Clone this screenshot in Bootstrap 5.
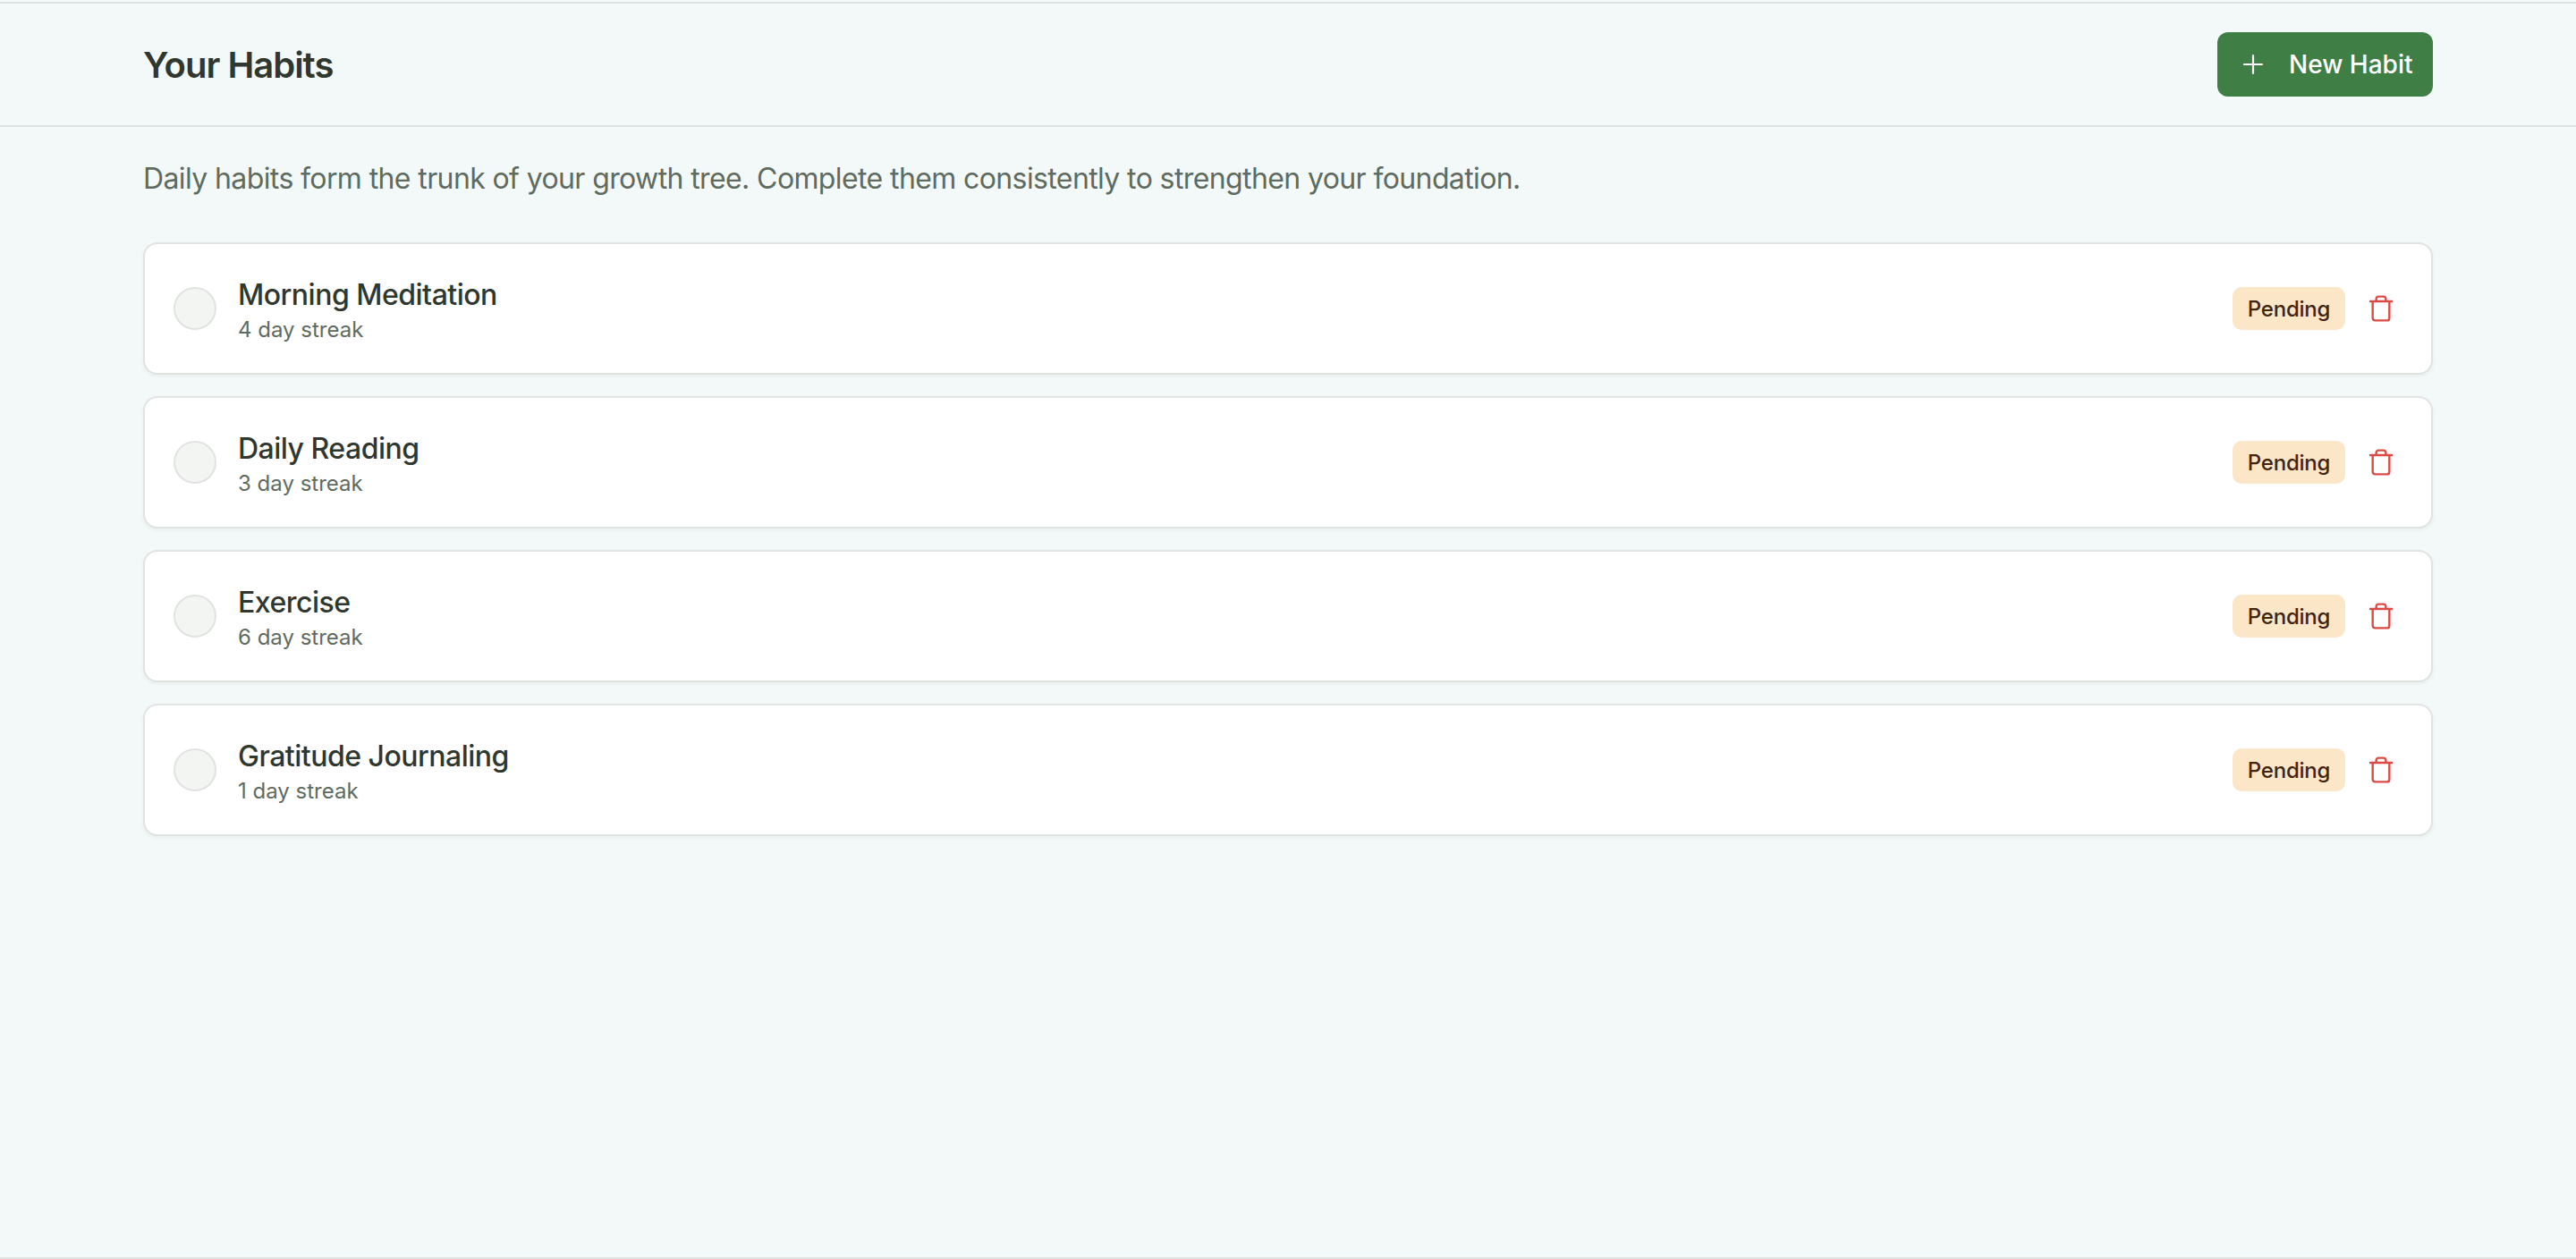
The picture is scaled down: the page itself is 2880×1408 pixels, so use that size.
<!DOCTYPE html>
<html lang="en">
<head>
<meta charset="utf-8">
<title>Your Habits</title>
<link href="https://cdn.jsdelivr.net/npm/bootstrap@5.3.0/dist/css/bootstrap.min.css" rel="stylesheet">
<style>
body{background:#f3f9f9;font-family:Inter,"Liberation Sans",sans-serif;color:#2f372f}
.page-frame{height:1406px;margin-top:2px;border-top:2px solid #e1e3e1;border-bottom:2px solid #e1e3e1}
.top-head{height:138px;border-bottom:2px solid #e1e3e1;padding:0 160px}
.top-title{font-size:40px;font-weight:600;letter-spacing:-1px;color:#2f372f;margin:2px 0 0;line-height:48px}
.new-btn{background:#3f7f46;border:0;border-radius:12px;color:#fff;font-size:28px;font-weight:500;height:72px;width:241px;padding:0 0 0 28px;gap:28px;line-height:40px}
.new-btn:hover,.new-btn:active{background:#3f7f46!important;color:#fff!important}
.plus-ic{width:24px;height:24px;flex:none}
.main-area{padding:0 160px}
.intro{font-size:32px;line-height:48px;letter-spacing:-.61px;color:#5f6b5f;margin:34px 0 47px}
.habit-box{height:148px;background:#fff;border:2px solid #e1e3e1;border-radius:16px;box-shadow:0 2px 4px rgba(0,0,0,.05);padding:0 32px;margin-bottom:24px;gap:24px}
.check-dot{width:48px;height:48px;border-radius:50%;background:#f3f5f3;border:2px solid #e1e3e1;flex:none}
.habit-name{font-size:32px;font-weight:500;line-height:44px;letter-spacing:-.5px;color:#2f372f;margin-top:3px}
.habit-streak{font-size:24px;line-height:32px;color:#5f6b5f;margin-top:1px}
.state-tag{width:126px;height:48px;background:#fce6c8;color:#42240f;border-radius:10px;font-size:24px;font-weight:500;line-height:32px;letter-spacing:-.2px;padding-top:1px}
.trash-wrap{width:26px;margin:0 11px 0 3px}
.trash-ic{width:32px;height:32px;flex:none;margin:0 -3px}
</style>
</head>
<body>
<div class="page-frame d-flex flex-column">
  <header class="top-head d-flex align-items-center justify-content-between">
    <h1 class="top-title">Your Habits</h1>
    <button type="button" class="btn new-btn d-flex align-items-center">
      <svg class="plus-ic" viewBox="0 0 24 24" fill="none" stroke="#fff" stroke-width="2.2" stroke-linecap="round"><path d="M12 2v20M2 12h20"/></svg>
      <span>New Habit</span>
    </button>
  </header>
  <main class="main-area">
    <p class="intro">Daily habits form the trunk of your growth tree. Complete them consistently to strengthen your foundation.</p>
    <div class="habit-box d-flex align-items-center">
      <div class="check-dot"></div>
      <div class="flex-grow-1"><div class="habit-name">Morning Meditation</div><div class="habit-streak">4 day streak</div></div>
      <span class="state-tag d-flex align-items-center justify-content-center">Pending</span>
      <span class="trash-wrap d-flex"><svg class="trash-ic" viewBox="0 0 24 24" fill="none" stroke="#dd4a44" stroke-width="1.8" stroke-linecap="round" stroke-linejoin="round"><path d="M3 6h18M19 6v14a2 2 0 0 1-2 2H7a2 2 0 0 1-2-2V6M8 6V4a2 2 0 0 1 2-2h4a2 2 0 0 1 2 2v2"/></svg></span>
    </div>
    <div class="habit-box d-flex align-items-center">
      <div class="check-dot"></div>
      <div class="flex-grow-1"><div class="habit-name">Daily Reading</div><div class="habit-streak">3 day streak</div></div>
      <span class="state-tag d-flex align-items-center justify-content-center">Pending</span>
      <span class="trash-wrap d-flex"><svg class="trash-ic" viewBox="0 0 24 24" fill="none" stroke="#dd4a44" stroke-width="1.8" stroke-linecap="round" stroke-linejoin="round"><path d="M3 6h18M19 6v14a2 2 0 0 1-2 2H7a2 2 0 0 1-2-2V6M8 6V4a2 2 0 0 1 2-2h4a2 2 0 0 1 2 2v2"/></svg></span>
    </div>
    <div class="habit-box d-flex align-items-center">
      <div class="check-dot"></div>
      <div class="flex-grow-1"><div class="habit-name">Exercise</div><div class="habit-streak">6 day streak</div></div>
      <span class="state-tag d-flex align-items-center justify-content-center">Pending</span>
      <span class="trash-wrap d-flex"><svg class="trash-ic" viewBox="0 0 24 24" fill="none" stroke="#dd4a44" stroke-width="1.8" stroke-linecap="round" stroke-linejoin="round"><path d="M3 6h18M19 6v14a2 2 0 0 1-2 2H7a2 2 0 0 1-2-2V6M8 6V4a2 2 0 0 1 2-2h4a2 2 0 0 1 2 2v2"/></svg></span>
    </div>
    <div class="habit-box d-flex align-items-center">
      <div class="check-dot"></div>
      <div class="flex-grow-1"><div class="habit-name">Gratitude Journaling</div><div class="habit-streak">1 day streak</div></div>
      <span class="state-tag d-flex align-items-center justify-content-center">Pending</span>
      <span class="trash-wrap d-flex"><svg class="trash-ic" viewBox="0 0 24 24" fill="none" stroke="#dd4a44" stroke-width="1.8" stroke-linecap="round" stroke-linejoin="round"><path d="M3 6h18M19 6v14a2 2 0 0 1-2 2H7a2 2 0 0 1-2-2V6M8 6V4a2 2 0 0 1 2-2h4a2 2 0 0 1 2 2v2"/></svg></span>
    </div>
  </main>
</div>
<script src="https://cdn.jsdelivr.net/npm/bootstrap@5.3.0/dist/js/bootstrap.bundle.min.js"></script>
</body>
</html>
